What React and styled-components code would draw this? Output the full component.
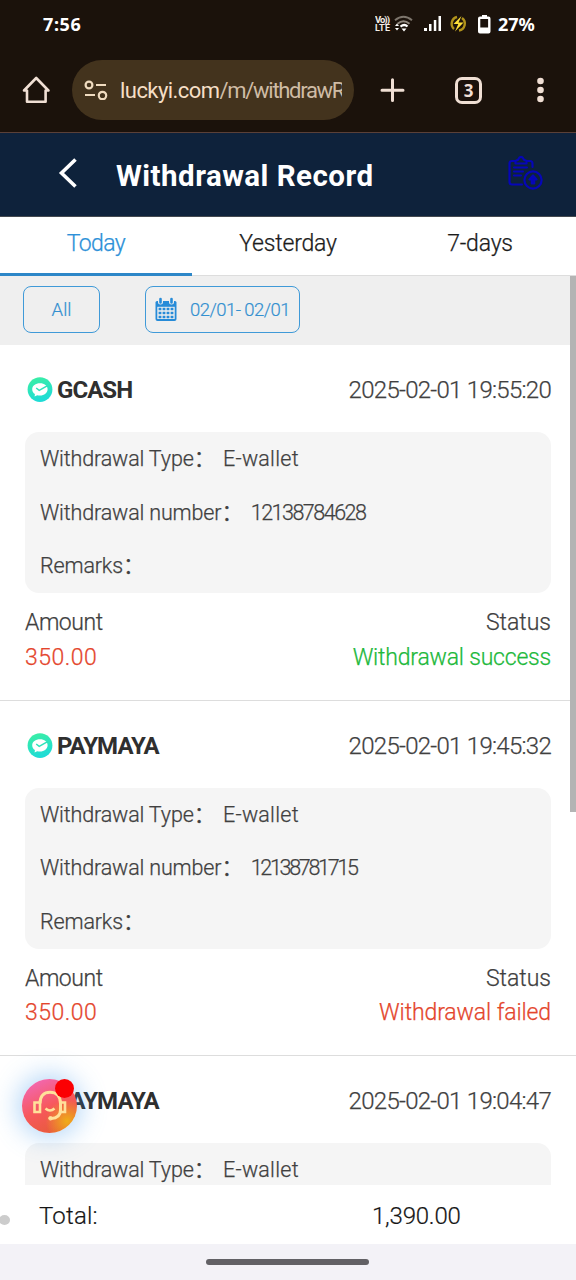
import { useState } from "react";
import styled, { createGlobalStyle } from "styled-components";

const records = [
  {
    id: 1,
    method: "GCASH",
    date: "2025-02-01 19:55:20",
    type: "E-wallet",
    number: "12138784628",
    numberTrack: -1.5,
    amount: "350.00",
    status: "Withdrawal success",
    success: true,
  },
  {
    id: 2,
    method: "PAYMAYA",
    date: "2025-02-01 19:45:32",
    type: "E-wallet",
    number: "12138781715",
    numberTrack: -2.3,
    amount: "350.00",
    status: "Withdrawal failed",
    success: false,
  },
  // details still loading
  {
    id: 3,
    method: "PAYMAYA",
    date: "2025-02-01 19:04:47",
    type: "E-wallet",
  },
];

const tabs = ["Today", "Yesterday", "7-days"];

const WalletIcon = () => (
  <svg width="26" height="26" viewBox="0 0 26 26">
    <defs>
      <linearGradient id="wallet" x1="0" y1="0" x2="0.3" y2="1">
        <stop offset="0" stopColor="#3df0a0" />
        <stop offset="1" stopColor="#1fdcd6" />
      </linearGradient>
    </defs>
    <circle cx="13" cy="12.6" r="12.4" fill="url(#wallet)" />
    <path
      d="M5.200 12.200C5.200 8.600 8.600 6.200 13 6.200s7.600 2.400 7.600 6-3.400 6.300-7.600 6.300c-1 0-2-.1-2.800-.3L7.600 19.600l.3-2.500c-1.700-1.100-2.700-2.900-2.700-4.900z"
      fill="#fff"
    />
    <path d="M9.200 11l3 2.300 8.400-4.600" fill="none" stroke="#2ee3bb" strokeWidth="1.500" />
  </svg>
);

const StatusIcons = () => (
  <svg width="120" height="24" viewBox="0 0 120 24">
    <g fill="#f4eee8" fontFamily="Roboto, sans-serif" fontWeight="700">
      <text x="0" y="11" fontSize="9.500" textLength="15">Vo))</text>
      <text x="0" y="19" fontSize="9" textLength="15">LTE</text>
    </g>
    <g fill="none" strokeLinecap="butt">
      <path d="M20 8.300q8.500-7 17 0" stroke="#7d756c" strokeWidth="2" />
      <path d="M22.500 11.700q6-5 12 0" stroke="#8f877e" strokeWidth="2" />
      <path d="M25.500 14.600q4-3.200 7 0" stroke="#fff" strokeWidth="2.200" />
    </g>
    <path d="M26.500 16.500h5L29 19.500z" fill="#fff" />
    <path d="M20 14l2-2.500 2 2.500zM20 16l2 2.500 2-2.500z" fill="#fff" />
    <g fill="#fff">
      <rect x="49" y="16" width="3" height="3" />
      <rect x="54" y="12" width="2.500" height="7" />
      <rect x="58.800" y="8" width="2.500" height="11" />
      <rect x="63.500" y="4" width="2.500" height="15" />
    </g>
    <path d="M79 17a7 7 0 0 1 3-12M87 6a7 7 0 0 1-3 12.500" fill="none" stroke="#b0921b" strokeWidth="2.400" />
    <path d="M86.500 4l-8 8h4.800l-3.300 7.500 8.500-9H83.500z" fill="#ffe13a" />
    <path
      d="M105 4.500h2V3h5v1.500h1.500q2 0 2 2v13q0 2-2 2H105q-2 0-2-2v-13q0-2 2-2z"
      fill="#fff"
    />
    <rect x="105.300" y="7" width="7.800" height="8.500" fill="#1b120b" />
  </svg>
);

const HomeIcon = () => (
  <svg width="28" height="28" viewBox="0 0 28 28" fill="none" stroke="#f0dfd4" strokeWidth="2.600" strokeLinejoin="round" strokeLinecap="round">
    <path d="M2 14.500L14.200 2l12.200 12.500h-2.800v11.300H5V14.500z" />
  </svg>
);

const SiteIcon = () => (
  <svg width="24" height="20" viewBox="0 0 24 20" fill="none" stroke="#f0dcc0" strokeWidth="2.200">
    <circle cx="5" cy="5" r="3.400" />
    <path d="M12 5H22M1 15h10" />
    <circle cx="18.500" cy="15.500" r="3.700" />
  </svg>
);

const PlusIcon = () => (
  <svg width="26" height="26" viewBox="0 0 26 26" stroke="#f0dfd4" strokeWidth="3" strokeLinecap="round">
    <path d="M13.500 2.800v20.800M3 13.200h21" />
  </svg>
);

const DotsIcon = () => (
  <svg width="8" height="26" viewBox="0 0 8 26" fill="#f0dfd4">
    <circle cx="4.500" cy="4" r="3.300" />
    <circle cx="4.500" cy="13" r="3.300" />
    <circle cx="4.500" cy="22" r="3.300" />
  </svg>
);

const BackIcon = () => (
  <svg width="20" height="32" viewBox="0 0 20 32" fill="none" stroke="#fff" strokeWidth="3.600">
    <path d="M18.500 2.500L4.500 16l14 13.500" />
  </svg>
);

const ReportIcon = () => (
  <svg width="36" height="36" viewBox="0 0 36 36" fill="none" stroke="#0606b8" strokeWidth="2.200" strokeLinecap="round" strokeLinejoin="round">
    <path d="M8 6H5Q2.500 6 2.500 8.500V27q0 2.500 2.500 2.500H15M20 6h3Q25.500 6 25.500 8.500V12" />
    <path d="M8.500 8.500V6l2.500-1.200Q14-1 17 4.800L19.500 6v2.500zM7 12.500h13M7 16.500h9M7 20.500h7" />
    <circle cx="26" cy="25" r="8.600" />
    <path d="M26 20.500l-3.500 4h2.300v4h2.400v-4h2.300z" fill="#0606b8" />
  </svg>
);

const CalendarIcon = () => (
  <svg width="22" height="25" viewBox="0 0 22 25">
    <path d="M2 4h18q1.500 0 1.500 1.500V22q0 2-2 2h-17Q.5 24 .5 22V5.500Q.5 4 2 4z" fill="#268bd8" />
    <path d="M5.500 2.500v2.500M16.500 2.500v2.500" stroke="#efefef" strokeWidth="5" strokeLinecap="round" />
    <path d="M5.500 2v3.500M16.500 2v3.500" stroke="#268bd8" strokeWidth="2.600" strokeLinecap="round" />
    <rect x="2.300" y="9.800" width="17.400" height="12.200" fill="#efefef" />
    <path
      d="M3.600 12h2.800M7.600 12h2.800M11.600 12h2.800M15.600 12h2.800M3.600 16h2.800M7.600 16h2.800M11.600 16h2.800M15.600 16h2.800M3.600 20h2.800M7.600 20h2.800M11.600 20h2.800M15.600 20h2.800"
      stroke="#268bd8"
      strokeWidth="2.700"
    />
  </svg>
);

const HeadsetIcon = () => (
  <svg width="36" height="34" viewBox="0 0 36 34" fill="none" stroke="#ffe19a" strokeWidth="3">
    <path d="M8 14.500C8 7 12 3.200 18 3.200S28.500 7 28.500 14.500V21q0 8-9.500 8.500" />
    <path d="M2.500 13.500H8v9.500H2.500zM28.500 13.500H33v9.500h-4.500z" strokeWidth="2.600" />
    <path d="M13.500 19.500q4.500 4 9 0" strokeWidth="2.600" />
    <circle cx="18.500" cy="29.300" r="1.800" fill="#ffe19a" strokeWidth="1" />
  </svg>
);

const App = () => {
  const [activeTab, setActiveTab] = useState("Today");

  return (
    <Page>
      <GlobalStyle />
      <StatusBar>
        <Clock>7:56</Clock>
        <StatusGroup>
          <StatusIcons />
          <Battery>27%</Battery>
        </StatusGroup>
      </StatusBar>

      <BrowserBar>
        <HomeIcon />
        <AddressBar>
          <SiteIcon />
          <Url>
            luckyi.com<UrlPath>/m/withdrawR</UrlPath>
          </Url>
        </AddressBar>
        <BrowserActions>
          <PlusIcon />
          <TabCount>3</TabCount>
          <DotsIcon />
        </BrowserActions>
      </BrowserBar>

      <Header>
        <BackIcon />
        <Title>Withdrawal Record</Title>
        <ReportIcon />
      </Header>

      <Tabs>
        {tabs.map((tab) => (
          <Tab key={tab} $active={tab === activeTab} onClick={() => setActiveTab(tab)}>
            {tab}
          </Tab>
        ))}
      </Tabs>

      <Content>
        <Filters>
          <FilterButton $width={77}>All</FilterButton>
          <FilterButton $width={155} $track={-0.55}>
            <CalendarIcon />
            02/01- 02/01
          </FilterButton>
        </Filters>

        {records.map((record) => (
          <Record key={record.id}>
            <RecordHead>
              <Method>
                <WalletIcon />
                <MethodName>{record.method}</MethodName>
              </Method>
              <RecordDate>{record.date}</RecordDate>
            </RecordHead>
            <Details>
              <DetailRow>
                <DetailLabel>Withdrawal Type：</DetailLabel>
                <DetailValue $track={0.25}>{record.type}</DetailValue>
              </DetailRow>
              {record.number && (
                <>
                  <DetailRow>
                    <DetailLabel>Withdrawal number：</DetailLabel>
                    <DetailValue $track={record.numberTrack}>{record.number}</DetailValue>
                  </DetailRow>
                  <DetailRow>
                    <DetailLabel>Remarks：</DetailLabel>
                  </DetailRow>
                </>
              )}
            </Details>
            {record.amount && (
              <Summary>
                <SummaryColumn>
                  <SummaryLabel $track={-0.45}>Amount</SummaryLabel>
                  <Amount>{record.amount}</Amount>
                </SummaryColumn>
                <SummaryColumn $end>
                  <SummaryLabel $track={0}>Status</SummaryLabel>
                  <Status $success={record.success}>{record.status}</Status>
                </SummaryColumn>
              </Summary>
            )}
          </Record>
        ))}
        <Scrollbar />
      </Content>

      <TotalBar>
        <TotalLabel>Total:</TotalLabel>
        <TotalValue>1,390.00</TotalValue>
        <EdgeDot />
      </TotalBar>
      <GestureBar>
        <GestureHandle />
      </GestureBar>

      <SupportButton>
        <HeadsetIcon />
        <UnreadDot />
      </SupportButton>
    </Page>
  );
};

export default App;

const GlobalStyle = createGlobalStyle`
  * {
    box-sizing: border-box;
  }

  body {
    margin: 0;
    overflow: hidden;
  }

  svg {
    display: block;
    flex-shrink: 0;
  }
`;

const Page = styled.div`
  position: relative;
  display: flex;
  flex-direction: column;
  width: 576px;
  height: 1280px;
  overflow: hidden;
  background: #fff;
  color: #404040;
  font-family: Roboto, "Noto Sans CJK SC", sans-serif;
  font-weight: 350;
  white-space: nowrap;
`;

const StatusBar = styled.div`
  display: flex;
  justify-content: space-between;
  align-items: center;
  height: 48px;
  padding: 0 41px 0 43px;
  background: #1b120b;
  color: #fff;
`;

const Clock = styled.span`
  font-family: "Noto Sans", sans-serif;
  font-size: 18px;
  font-weight: 700;
  letter-spacing: 0.6px;
`;

const StatusGroup = styled.div`
  display: flex;
  align-items: center;
  gap: 3px;
`;

const Battery = styled.span`
  width: 37px;
  font-family: "Noto Sans", sans-serif;
  font-size: 18px;
  font-weight: 700;
`;

const BrowserBar = styled.div`
  display: flex;
  align-items: center;
  height: 85px;
  padding: 0 32px 0 22px;
  border-bottom: 1px solid #5a4038;
  background: #1b120b;
`;

const AddressBar = styled.div`
  display: flex;
  align-items: center;
  gap: 12px;
  width: 282px;
  height: 60px;
  margin-left: 22px;
  padding: 0 12px;
  border-radius: 30px;
  background: #43331d;
`;

const Url = styled.div`
  width: 222px;
  overflow: hidden;
  color: #f5dfc6;
  font-size: 22px;
  font-weight: 400;
  letter-spacing: -0.55px;
`;

const UrlPath = styled.span`
  color: #cfbca5;
  letter-spacing: -1.3px;
`;

const BrowserActions = styled.div`
  display: flex;
  flex: 1;
  justify-content: space-between;
  align-items: center;
  margin-left: 25px;
`;

const TabCount = styled.div`
  display: flex;
  justify-content: center;
  align-items: center;
  width: 27px;
  height: 27px;
  margin-right: 4px;
  border: 3px solid #f0dfd4;
  border-radius: 7px;
  color: #f0dfd4;
  font-family: "Noto Sans", sans-serif;
  font-size: 17px;
  font-weight: 700;
`;

const Header = styled.header`
  display: flex;
  align-items: center;
  height: 84px;
  padding: 0 33px 4px 57px;
  border-bottom: 1px solid #44494f;
  background: #0e223b;
`;

const Title = styled.h1`
  flex: 1;
  margin: 6px 0 0 39px;
  color: #fff;
  font-size: 29.5px;
  font-weight: 700;
  letter-spacing: 0.48px;
`;

const Tabs = styled.nav`
  display: flex;
  height: 59px;
`;

const Tab = styled.button`
  flex: 1;
  padding: 0 0 4px;
  border: none;
  border-bottom: ${(props) => (props.$active ? "3px solid #2d87c8" : "1px solid #ddd")};
  background: #fff;
  color: ${(props) => (props.$active ? "#2d91d8" : "#1c1c1c")};
  font-family: inherit;
  font-size: 23px;
  font-weight: 350;
  -webkit-text-stroke: 0.25px;
  line-height: 48px;
  padding-bottom: ${(props) => (props.$active ? "2px" : "4px")};
  letter-spacing: ${(props) => (props.$active ? "-0.6px" : "-0.2px")};
`;

const Content = styled.main`
  position: relative;
  flex: 1;
  min-height: 0;
  overflow: hidden;
`;

const Filters = styled.div`
  display: flex;
  gap: 45px;
  height: 69px;
  padding: 10px 23px;
  background: #efefef;
`;

const FilterButton = styled.button`
  display: flex;
  justify-content: center;
  align-items: center;
  gap: 13px;
  width: ${(props) => props.$width}px;
  height: 47px;
  padding: 0;
  border: 1px solid #3f9ad8;
  border-radius: 8px;
  background: transparent;
  color: #3390d0;
  font-family: inherit;
  font-size: 18.5px;
  font-weight: 350;
  -webkit-text-stroke: 0.2px;
  letter-spacing: ${(props) => props.$track || 0}px;
`;

const Record = styled.article`
  height: 355.6px;
  padding: 0 25px;
  border-bottom: 1px solid #ddd;
`;

const RecordHead = styled.div`
  display: flex;
  justify-content: space-between;
  align-items: center;
  height: 87px;
  padding-top: 3px;
`;

const Method = styled.div`
  display: flex;
  align-items: center;
  gap: 4px;
  margin-left: 2px;
`;

const MethodName = styled.span`
  color: #2f2f2f;
  font-size: 24px;
  font-weight: 700;
  letter-spacing: -0.95px;
`;

const RecordDate = styled.time`
  font-size: 24px;
  letter-spacing: -0.72px;
  -webkit-text-stroke: 0.25px;
`;

const Details = styled.div`
  height: 161px;
  padding: 0 15px;
  border-radius: 14px;
  background: #f5f5f5;
`;

const DetailRow = styled.div`
  height: 53.6px;
  overflow: hidden;
  font-size: 21.5px;
  line-height: 54.2px;
  -webkit-text-stroke: 0.25px;
`;

const DetailLabel = styled.span`
  margin-right: 8px;
  letter-spacing: -0.15px;
`;

const DetailValue = styled.span`
  letter-spacing: ${(props) => props.$track}px;
`;

const Summary = styled.div`
  display: flex;
  justify-content: space-between;
  padding-top: 13.4px;
`;

const SummaryColumn = styled.div`
  display: flex;
  flex-direction: column;
  align-items: ${(props) => (props.$end ? "flex-end" : "flex-start")};
  font-size: 23px;
  line-height: 34.5px;
  -webkit-text-stroke: 0.25px;
`;

const SummaryLabel = styled.span`
  letter-spacing: ${(props) => props.$track}px;
`;

const Amount = styled.span`
  color: #e4452c;
  letter-spacing: 0.5px;
`;

const Status = styled.span`
  color: ${(props) => (props.$success ? "#20b83a" : "#e4452c")};
  letter-spacing: ${(props) => (props.$success ? "-0.2px" : "-0.1px")};
`;

const Scrollbar = styled.div`
  position: absolute;
  top: 0;
  right: 0;
  width: 6px;
  height: 536px;
  background: #b4b4b4;
`;

const TotalBar = styled.footer`
  position: relative;
  display: flex;
  align-items: center;
  height: 59px;
  padding: 2px 0 0 39px;
  background: #fff;
  color: #151515;
  font-size: 24px;
  -webkit-text-stroke: 0.2px;
`;

const TotalLabel = styled.span`
  width: 333px;
  letter-spacing: 0.2px;
`;

const TotalValue = styled.span`
  letter-spacing: -0.2px;
`;

const EdgeDot = styled.span`
  position: absolute;
  left: -1px;
  top: 30px;
  width: 11px;
  height: 10px;
  border-radius: 50%;
  background: #ccc;
`;

const GestureBar = styled.div`
  display: flex;
  justify-content: center;
  align-items: center;
  height: 36px;
  padding-right: 1px;
  background: #f3f2f7;
`;

const GestureHandle = styled.div`
  width: 163px;
  height: 6px;
  border-radius: 3px;
  background: #626165;
`;

const SupportButton = styled.button`
  position: absolute;
  left: 22px;
  top: 1079px;
  display: flex;
  justify-content: center;
  align-items: center;
  width: 55px;
  height: 54px;
  padding: 0;
  border: none;
  border-radius: 50%;
  background:
    radial-gradient(circle at 82% 78%, #efad18 0%, rgba(239, 150, 30, 0) 35%),
    linear-gradient(155deg, #f268b4 8%, #f7585c 50%, #e65b38 90%);
  box-shadow: 0 0 26px 4px rgba(70, 155, 235, 0.42);
`;

const UnreadDot = styled.span`
  position: absolute;
  top: 0;
  right: 3px;
  width: 19px;
  height: 19px;
  border-radius: 50%;
  background: #fb0003;
`;
